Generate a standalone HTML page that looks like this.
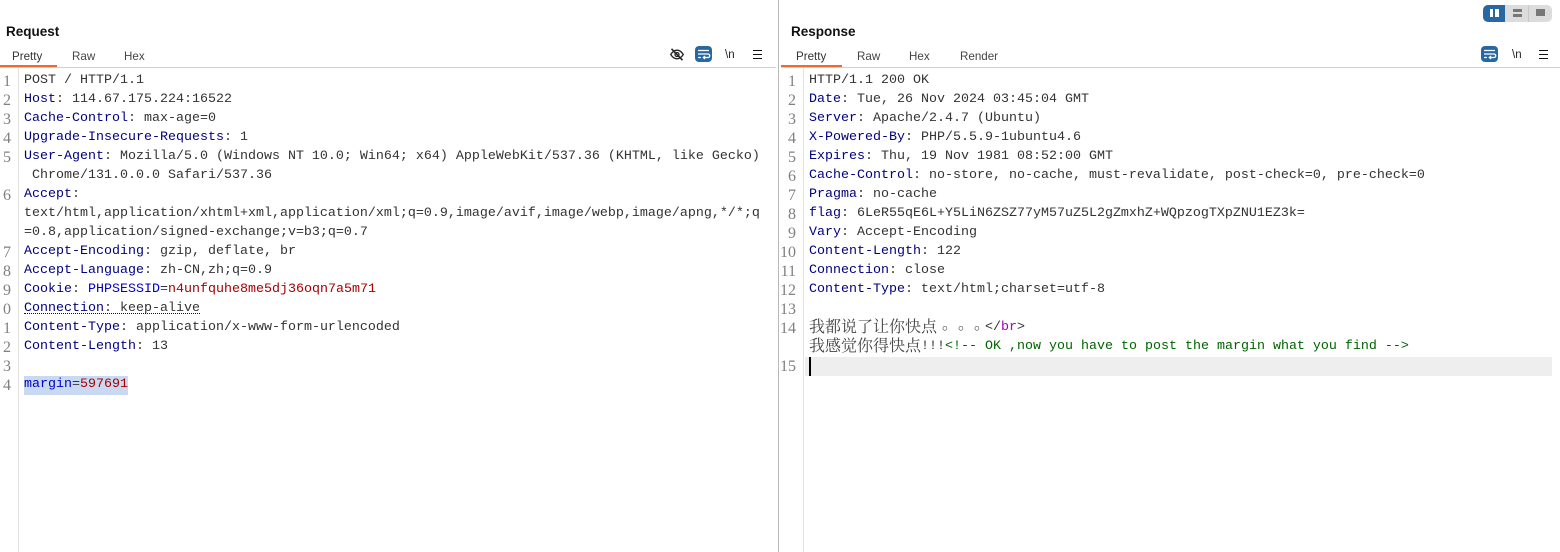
<!DOCTYPE html>
<html><head><meta charset="utf-8"><style>
html,body{margin:0;padding:0;background:#fff}
body{width:1560px;height:552px;position:relative;overflow:hidden;font-family:"Liberation Mono","Noto Serif CJK SC",monospace;font-size:13.33px;color:#333}
.a{position:absolute}
.l{position:absolute;white-space:pre;height:19px;line-height:19px}
.n{position:absolute;line-height:19px;height:19px;font-family:"Liberation Serif",serif;font-size:16px;color:#808080;text-align:right}
.h{color:#000080}
.t{position:absolute;font:11.6px/14px "Liberation Sans",sans-serif;color:#444;top:50px;white-space:pre}
.title{position:absolute;font:bold 13.5px/16px "Liberation Sans",sans-serif;color:#111;top:24px}
.cj{font-family:"Noto Serif CJK SC",serif;font-size:16px;color:#444;line-height:0;text-spacing-trim:space-all;font-feature-settings:"palt" 0;position:relative;top:2px}
.cj b{font-weight:normal;position:relative;left:5px;top:-3px}
svg{position:absolute;overflow:visible}
</style></head><body>
<!-- toggle -->
<div class="a" style="left:1483px;top:5px;width:69px;height:17px;background:#dcdcdc;border-radius:5px"></div>
<div class="a" style="left:1483px;top:5px;width:22px;height:17px;background:#2767a3;border-radius:5px 0 0 5px"></div>
<div class="a" style="left:1528px;top:5px;width:1px;height:17px;background:#c8c8c8"></div>
<div class="a" style="left:1490px;top:9px;width:3px;height:8px;background:#fff"></div>
<div class="a" style="left:1495px;top:9px;width:4px;height:8px;background:#fff"></div>
<div class="a" style="left:1513px;top:9px;width:9px;height:3px;background:#777"></div>
<div class="a" style="left:1513px;top:14px;width:9px;height:3px;background:#777"></div>
<div class="a" style="left:1536px;top:9px;width:9px;height:7px;background:#777"></div>

<!-- divider -->
<div class="a" style="left:778px;top:0;width:1px;height:552px;background:#b8b8b8"></div>
<div class="a" style="left:0;top:67px;width:776px;height:1px;background:#d0d0d0"></div>
<div class="a" style="left:781px;top:67px;width:779px;height:1px;background:#d0d0d0"></div>
<div class="a" style="left:18px;top:68px;width:1px;height:484px;background:#e2e2e2"></div>
<div class="a" style="left:803px;top:68px;width:1px;height:484px;background:#e2e2e2"></div>

<!-- headers -->
<div class="title" style="left:6px">Request</div>
<div class="title" style="left:791px">Response</div>
<div class="t" style="left:12px;color:#333">Pretty</div>
<div class="t" style="left:72px">Raw</div>
<div class="t" style="left:124px">Hex</div>
<div class="a" style="left:0;top:65px;width:57px;height:2px;background:#f0682e"></div>
<div class="t" style="left:796px;color:#333">Pretty</div>
<div class="t" style="left:857px">Raw</div>
<div class="t" style="left:909px">Hex</div>
<div class="t" style="left:960px">Render</div>
<div class="a" style="left:781px;top:65px;width:61px;height:2px;background:#f0682e"></div>

<!-- left icons -->
<svg style="left:670px;top:48px" width="14" height="13" viewBox="0 0 14 13" fill="none" stroke="#222" stroke-width="1.3"><path d="M.7 6.5C3 3 5 2.2 7 2.2s4 .8 6.3 4.3C11 10 9 10.8 7 10.8S3 10 .7 6.5Z"/><circle cx="7" cy="6.5" r="2"/><path d="M1.5 .8 12.5 12.2" stroke-width="1.5"/></svg>
<div class="a" style="left:695px;top:46px;width:17px;height:16px;background:#2767a3;border-radius:4px"></div>
<svg style="left:695px;top:46px" width="17" height="16" viewBox="0 0 17 16" fill="none" stroke="#fff" stroke-width="1.3"><path d="M3 4.5H14M3 8H13a1.5 1.5 0 0 1 0 3.5H8.5M10 10 8.3 11.5 10 13M3 11.5H6"/></svg>
<div class="t" style="left:725px;color:#222;top:48px;font-size:11.5px">\n</div>
<div class="a" style="left:753px;top:50px;width:9px;height:1px;background:#111"></div>
<div class="a" style="left:753px;top:54px;width:9px;height:1px;background:#111"></div>
<div class="a" style="left:753px;top:58px;width:9px;height:1px;background:#111"></div>

<!-- right icons -->
<div class="a" style="left:1481px;top:46px;width:17px;height:16px;background:#2767a3;border-radius:4px"></div>
<svg style="left:1481px;top:46px" width="17" height="16" viewBox="0 0 17 16" fill="none" stroke="#fff" stroke-width="1.3"><path d="M3 4.5H14M3 8H13a1.5 1.5 0 0 1 0 3.5H8.5M10 10 8.3 11.5 10 13M3 11.5H6"/></svg>
<div class="t" style="left:1512px;color:#222;top:48px;font-size:11.5px">\n</div>
<div class="a" style="left:1539px;top:50px;width:9px;height:1px;background:#111"></div>
<div class="a" style="left:1539px;top:54px;width:9px;height:1px;background:#111"></div>
<div class="a" style="left:1539px;top:58px;width:9px;height:1px;background:#111"></div>

<!-- left highlight -->
<div class="a" style="left:24px;top:376px;width:104px;height:19px;background:#c9d9f1"></div>

<!-- left gutter -->
<div class="n" style="left:0;width:11px;top:72px">1</div>
<div class="n" style="left:0;width:11px;top:91px">2</div>
<div class="n" style="left:0;width:11px;top:110px">3</div>
<div class="n" style="left:0;width:11px;top:129px">4</div>
<div class="n" style="left:0;width:11px;top:148px">5</div>
<div class="n" style="left:0;width:11px;top:186px">6</div>
<div class="n" style="left:0;width:11px;top:243px">7</div>
<div class="n" style="left:0;width:11px;top:262px">8</div>
<div class="n" style="left:0;width:11px;top:281px">9</div>
<div class="n" style="left:0;width:11px;top:300px">0</div>
<div class="n" style="left:0;width:11px;top:319px">1</div>
<div class="n" style="left:0;width:11px;top:338px">2</div>
<div class="n" style="left:0;width:11px;top:357px">3</div>
<div class="n" style="left:0;width:11px;top:376px">4</div>

<!-- left text -->
<div class="l" style="left:24px;top:71px">POST / HTTP/1.1</div>
<div class="l" style="left:24px;top:90px"><span class="h">Host</span>: 114.67.175.224:16522</div>
<div class="l" style="left:24px;top:109px"><span class="h">Cache-Control</span>: max-age=0</div>
<div class="l" style="left:24px;top:128px"><span class="h">Upgrade-Insecure-Requests</span>: 1</div>
<div class="l" style="left:24px;top:147px"><span class="h">User-Agent</span>: Mozilla/5.0 (Windows NT 10.0; Win64; x64) AppleWebKit/537.36 (KHTML, like Gecko)</div>
<div class="l" style="left:24px;top:166px"> Chrome/131.0.0.0 Safari/537.36</div>
<div class="l" style="left:24px;top:185px"><span class="h">Accept</span>:</div>
<div class="l" style="left:24px;top:204px">text/html,application/xhtml+xml,application/xml;q=0.9,image/avif,image/webp,image/apng,*/*;q</div>
<div class="l" style="left:24px;top:223px">=0.8,application/signed-exchange;v=b3;q=0.7</div>
<div class="l" style="left:24px;top:242px"><span class="h">Accept-Encoding</span>: gzip, deflate, br</div>
<div class="l" style="left:24px;top:261px"><span class="h">Accept-Language</span>: zh-CN,zh;q=0.9</div>
<div class="l" style="left:24px;top:280px"><span class="h">Cookie</span>: <span style="color:#0000c8">PHPSESSID</span>=<span style="color:#a80000">n4unfquhe8me5dj36oqn7a5m71</span></div>
<div class="l" style="left:24px;top:299px"><span class="h">Connection</span>: keep-alive</div>
<div class="a" style="left:24px;top:313px;width:176px;height:0;border-top:1px dotted #0000a0"></div>
<div class="l" style="left:24px;top:318px"><span class="h">Content-Type</span>: application/x-www-form-urlencoded</div>
<div class="l" style="left:24px;top:337px"><span class="h">Content-Length</span>: 13</div>
<div class="l" style="left:24px;top:375px"><span style="color:#0000c8">margin</span>=<span style="color:#a80000">597691</span></div>

<!-- right current line -->
<div class="a" style="left:805px;top:357px;width:747px;height:19px;background:#eeeeee"></div>
<div class="a" style="left:809px;top:357px;width:2px;height:19px;background:#000"></div>

<!-- right gutter -->
<div class="n" style="left:770px;width:26px;top:72px">1</div>
<div class="n" style="left:770px;width:26px;top:91px">2</div>
<div class="n" style="left:770px;width:26px;top:110px">3</div>
<div class="n" style="left:770px;width:26px;top:129px">4</div>
<div class="n" style="left:770px;width:26px;top:148px">5</div>
<div class="n" style="left:770px;width:26px;top:167px">6</div>
<div class="n" style="left:770px;width:26px;top:186px">7</div>
<div class="n" style="left:770px;width:26px;top:205px">8</div>
<div class="n" style="left:770px;width:26px;top:224px">9</div>
<div class="n" style="left:770px;width:26px;top:243px">10</div>
<div class="n" style="left:770px;width:26px;top:262px">11</div>
<div class="n" style="left:770px;width:26px;top:281px">12</div>
<div class="n" style="left:770px;width:26px;top:300px">13</div>
<div class="n" style="left:770px;width:26px;top:319px">14</div>
<div class="n" style="left:770px;width:26px;top:357px">15</div>

<!-- right text -->
<div class="l" style="left:809px;top:71px">HTTP/1.1 200 OK</div>
<div class="l" style="left:809px;top:90px"><span class="h">Date</span>: Tue, 26 Nov 2024 03:45:04 GMT</div>
<div class="l" style="left:809px;top:109px"><span class="h">Server</span>: Apache/2.4.7 (Ubuntu)</div>
<div class="l" style="left:809px;top:128px"><span class="h">X-Powered-By</span>: PHP/5.5.9-1ubuntu4.6</div>
<div class="l" style="left:809px;top:147px"><span class="h">Expires</span>: Thu, 19 Nov 1981 08:52:00 GMT</div>
<div class="l" style="left:809px;top:166px"><span class="h">Cache-Control</span>: no-store, no-cache, must-revalidate, post-check=0, pre-check=0</div>
<div class="l" style="left:809px;top:185px"><span class="h">Pragma</span>: no-cache</div>
<div class="l" style="left:809px;top:204px"><span class="h">flag</span>: 6LeR55qE6L+Y5LiN6ZSZ77yM57uZ5L2gZmxhZ+WQpzogTXpZNU1EZ3k=</div>
<div class="l" style="left:809px;top:223px"><span class="h">Vary</span>: Accept-Encoding</div>
<div class="l" style="left:809px;top:242px"><span class="h">Content-Length</span>: 122</div>
<div class="l" style="left:809px;top:261px"><span class="h">Connection</span>: close</div>
<div class="l" style="left:809px;top:280px"><span class="h">Content-Type</span>: text/html;charset=utf-8</div>
<div class="l" style="left:809px;top:318px"><span class="cj">我都说了让你快点<b>。。。</b></span>&lt;/<span style="color:#a000c0">br</span>&gt;</div>
<div class="l" style="left:809px;top:337px"><span class="cj">我感觉你得快点</span>!!!<span style="color:#006400">&lt;!-- OK ,now you have to post the margin what you find --&gt;</span></div>
</body></html>
